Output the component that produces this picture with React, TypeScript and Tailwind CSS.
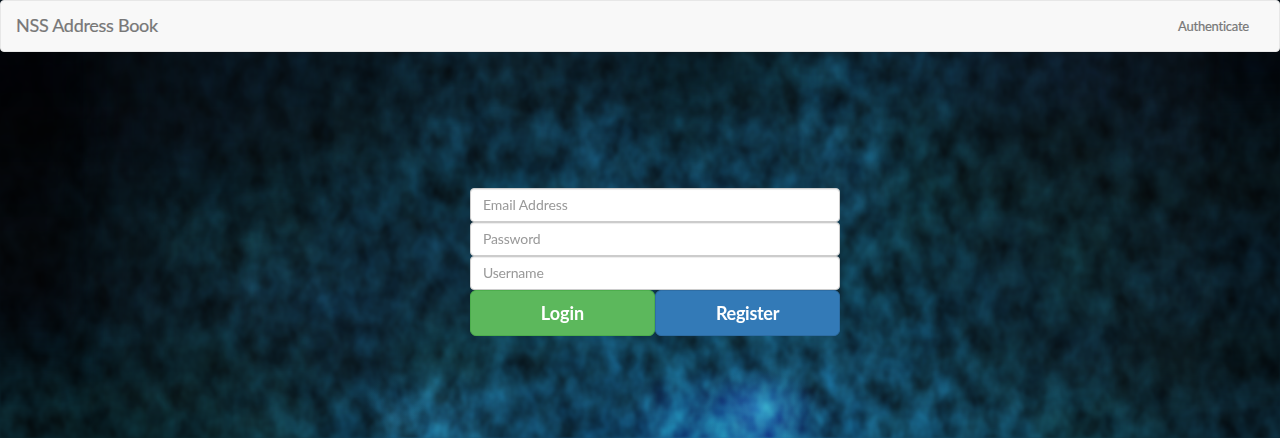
import React from "react";

const CELL_W = 80;
const CELL_H = 55;

const texture: string[][] = [
  ["#010206", "#02080e", "#04101a", "#051622", "#061a26", "#082434", "#0a2838", "#082434", "#06202c", "#082a38", "#0b3850", "#0a2e44", "#081e2e", "#081a2a", "#06121c", "#02080e"],
  ["#020406", "#030a12", "#05121c", "#06161f", "#08202a", "#0b344a", "#0b344a", "#0e4462", "#093042", "#0c3850", "#0e4460", "#0a303e", "#081f2a", "#07181f", "#081c2a", "#06141c"],
  ["#03070c", "#04121a", "#051b26", "#061f29", "#092c3e", "#0a3448", "#0a3850", "#0e4462", "#0c3e5c", "#0c4260", "#104a6a", "#0a3442", "#09262f", "#09242e", "#071c24", "#07161c"],
  ["#04090d", "#05141c", "#092a36", "#0c3240", "#0b3044", "#0b3046", "#0b384e", "#0c3c55", "#0c3c55", "#0c3e58", "#0c4058", "#0b3646", "#0a2a38", "#0a2c36", "#081f2a", "#071a26"],
  ["#04090f", "#061620", "#082230", "#0e354c", "#0b3048", "#0b2e42", "#0b3a50", "#0c3e58", "#0c4058", "#0c4058", "#0c425a", "#0b3c54", "#0a2e42", "#0a2e3a", "#0a2938", "#081e2a"],
  ["#04121a", "#061e28", "#08262f", "#082430", "#0a283a", "#0d3e4c", "#0e465e", "#0e4a6a", "#0f5476", "#0e4b6c", "#104e6e", "#0d4460", "#0a2e3c", "#0a293b", "#07191f", "#071920"],
  ["#09262f", "#07232a", "#092b34", "#0d3a49", "#0c3f5a", "#17638a", "#0e486a", "#0e4c73", "#156ca0", "#1f80b5", "#115a83", "#105375", "#0e4660", "#0d3f4f", "#0b3140", "#0a2736"],
];

function Backdrop() {
  return (
    <svg
      aria-hidden="true"
      className="absolute inset-0 h-full w-full"
      viewBox="0 0 1280 438"
      preserveAspectRatio="xMidYMid slice"
    >
      <defs>
        <filter id="soften" x="-10%" y="-10%" width="120%" height="120%" colorInterpolationFilters="sRGB">
          <feGaussianBlur stdDeviation="20" />
        </filter>
        <filter id="mottle" x="0" y="0" width="100%" height="100%" colorInterpolationFilters="sRGB">
          <feTurbulence type="fractalNoise" baseFrequency="0.045 0.034" numOctaves="3" seed="21" />
          <feColorMatrix values="0.85 0 0 0 0.06  0.75 0.15 0 0 -0.02  0.7 0.2 0 0 -0.03  0 0 0 0 1" />
          <feGaussianBlur stdDeviation="1.2" />
        </filter>
        <radialGradient id="glow">
          <stop offset="0" stopColor="#32a2e0" stopOpacity="0.65" />
          <stop offset="1" stopColor="#1c80b8" stopOpacity="0" />
        </radialGradient>
      </defs>
      <rect width="1280" height="438" fill="#061620" />
      <g filter="url(#soften)">
        <rect x="-80" y="-80" width="1440" height="140" fill="#03101a" />
        {texture.map((row, r) =>
          row.map((fill, c) => {
            const left = c === 0 ? -80 : c * CELL_W;
            const right = c === row.length - 1 ? 1360 : (c + 1) * CELL_W;
            const top = r === 0 ? 30 : 52 + r * CELL_H;
            const bottom = r === texture.length - 1 ? 520 : 52 + (r + 1) * CELL_H;
            return (
              <rect key={`${r}-${c}`} x={left} y={top} width={right - left} height={bottom - top} fill={fill} />
            );
          })
        )}
      </g>
      <ellipse cx="758" cy="408" rx="55" ry="40" fill="url(#glow)" />
      <ellipse cx="395" cy="415" rx="32" ry="45" fill="url(#glow)" opacity="0.35" />
      <rect width="1280" height="438" filter="url(#mottle)" className="mix-blend-overlay" />
      <rect x="100" width="1120" height="438" fill="#28343c" opacity="0.1" filter="url(#soften)" />
    </svg>
  );
}

function Field({ label, type, tracking }: { label: string; type: string; tracking: string }) {
  return (
    <input
      type={type}
      placeholder={label}
      aria-label={label}
      className={`block h-[34px] w-full rounded border border-[#ccc] bg-white px-3 pb-[7px] pt-[5px] text-[14px] leading-5 text-[#555] shadow-[inset_0_1px_1px_rgba(0,0,0,0.075)] outline-none placeholder:text-[#999] placeholder:opacity-100 ${tracking}`}
    />
  );
}

export default function App() {
  return (
    <div className="relative isolate flex h-[438px] w-full flex-col overflow-hidden bg-[#061620] font-['Lato',sans-serif] [font-variant-ligatures:none]">
      <Backdrop />
      <nav className="relative flex h-[52px] shrink-0 items-center justify-between rounded border border-[#e7e7e7] bg-[#f8f8f8] pl-[15px] pr-[30px] text-[#777]">
        <a href="#" className="pb-0.5 text-[18px] leading-5 tracking-[-0.28px] [-webkit-text-stroke:0.2px_#777]">NSS Address Book</a>
        <a href="#" className="text-[13px] leading-5 tracking-[-0.23px] [-webkit-text-stroke:0.2px_#777]">Authenticate</a>
      </nav>
      <form className="relative ml-[470px] mt-[136px] w-[370px]" onSubmit={(e) => e.preventDefault()}>
        <Field label="Email Address" type="email" tracking="tracking-[-0.05px]" />
        <Field label="Password" type="password" tracking="tracking-[-0.16px]" />
        <Field label="Username" type="text" tracking="tracking-[-0.2px]" />
        <div className="grid grid-cols-2 text-[18px] font-bold leading-6 text-white">
          <button type="button" className="h-[46px] rounded-md border border-[#4cae4c] bg-[#5cb85c]">Login</button>
          <button type="button" className="h-[46px] rounded-md border border-[#2e6da4] bg-[#337ab7] tracking-[-0.3px]">Register</button>
        </div>
      </form>
    </div>
  );
}
